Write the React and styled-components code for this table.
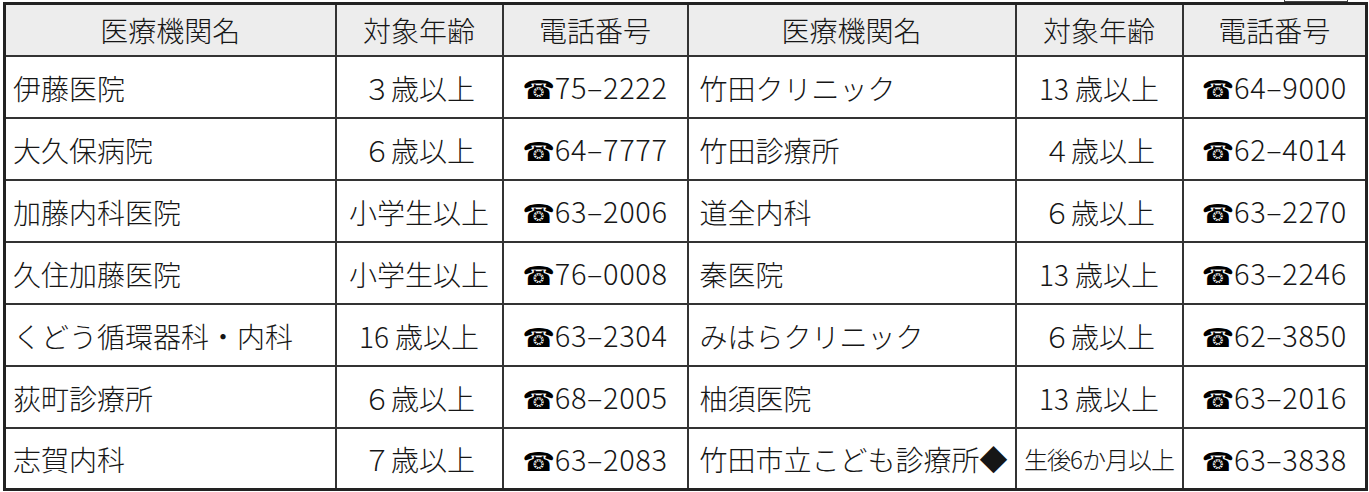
import React from "react";
import styled, { createGlobalStyle } from "styled-components";

const GlobalStyle = createGlobalStyle`
  html, body {
    margin: 0;
    padding: 0;
    background: #ffffff;
  }
  body {
    font-family: "Noto Sans CJK JP", "Noto Sans", sans-serif;
    color: #161616;
  }
`;

const Page = styled.div`
  position: relative;
  width: 1369px;
  height: 492px;
  padding: 2px 1px 0 3px;
  box-sizing: border-box;
  overflow: hidden;
`;

// the cut-off edge of something printed above the table
const CornerMark = styled.div`
  position: absolute;
  top: -9px;
  left: 1284px;
  width: 64px;
  height: 11px;
  border: 1px solid #444;
  border-top: none;
  box-sizing: border-box;
`;

const Table = styled.table`
  border-collapse: collapse;
  table-layout: fixed;
  width: 1365px;
  border: 3px solid #222;
  font-size: 28px;
  font-weight: 300;
  line-height: 1;
`;

const HeadRow = styled.tr`
  height: 52px;
  background: #ededed;
`;

const Row = styled.tr`
  height: 62px;
`;

const Th = styled.th`
  font-weight: 300;
  text-align: center;
  padding: 0;
  border: 2px solid #333;
  border-top: none;
  white-space: nowrap;
`;

const Td = styled.td`
  padding: 2px ${(p) => (p.$pad ? p.$pad : 0)}px 0;
  text-align: ${(p) => p.$align || "center"};
  border: 2px solid #333;
  white-space: nowrap;
  font-size: ${(p) => (p.$small ? "24px" : "28px")};
  letter-spacing: ${(p) => (p.$small ? "-1px" : "0")};
`;

const Number = styled.span`
  font-size: 29px;
  letter-spacing: 0.6px;
`;

const TelMark = styled.span`
  font-family: "DejaVu Sans", sans-serif;
  font-size: 26px;
  font-weight: 700;
  color: #000;
`;

const Tel = ({ number }) => (
  <>
    <TelMark>☎</TelMark>
    <Number>{number}</Number>
  </>
);

const rows = [
  ["伊藤医院", "３歳以上", "75–2222", "竹田クリニック", "13 歳以上", "64–9000"],
  ["大久保病院", "６歳以上", "64–7777", "竹田診療所", "４歳以上", "62–4014"],
  ["加藤内科医院", "小学生以上", "63–2006", "道全内科", "６歳以上", "63–2270"],
  ["久住加藤医院", "小学生以上", "76–0008", "秦医院", "13 歳以上", "63–2246"],
  ["くどう循環器科・内科", "16 歳以上", "63–2304", "みはらクリニック", "６歳以上", "62–3850"],
  ["荻町診療所", "６歳以上", "68–2005", "柚須医院", "13 歳以上", "63–2016"],
  ["志賀内科", "７歳以上", "63–2083", "竹田市立こども診療所◆", "生後6か月以上", "63–3838"],
];

const headers = ["医療機関名", "対象年齢", "電話番号"];

const App = () => {
  return (
    <Page>
      <GlobalStyle />
      <CornerMark />
      <Table>
        <colgroup>
          <col style={{ width: 331 }} />
          <col style={{ width: 167 }} />
          <col style={{ width: 185 }} />
          <col style={{ width: 328 }} />
          <col style={{ width: 167 }} />
          <col style={{ width: 184 }} />
        </colgroup>
        <thead>
          <HeadRow>
            {[...headers, ...headers].map((h, i) => (
              <Th key={i}>{h}</Th>
            ))}
          </HeadRow>
        </thead>
        <tbody>
          {rows.map((r, i) => (
            <Row key={i}>
              <Td $align="left" $pad={7}>{r[0]}</Td>
              <Td>{r[1]}</Td>
              <Td><Tel number={r[2]} /></Td>
              <Td $align="left" $pad={11}>{r[3]}</Td>
              <Td $small={r[4].startsWith("生後")}>{r[4]}</Td>
              <Td><Tel number={r[5]} /></Td>
            </Row>
          ))}
        </tbody>
      </Table>
    </Page>
  );
};

export default App;
